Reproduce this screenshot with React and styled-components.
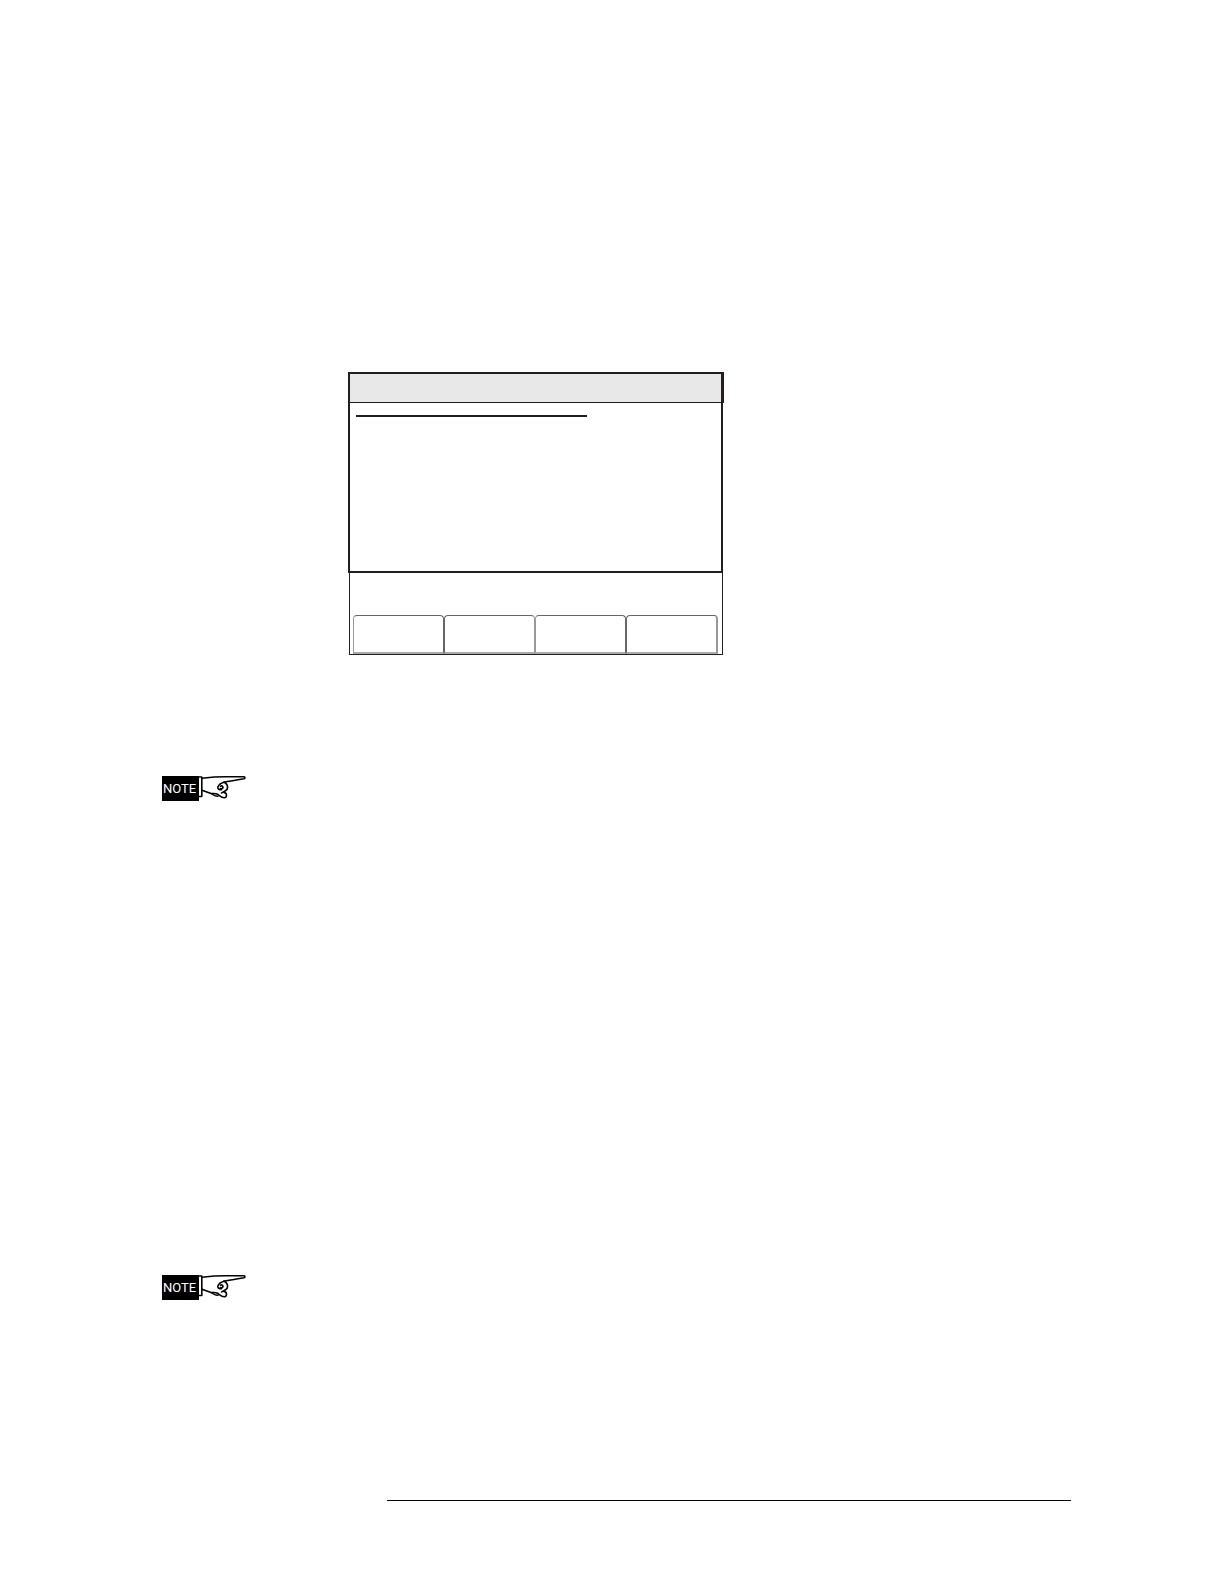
import React from "react";
import styled, { createGlobalStyle } from "styled-components";

const ink = "#231f20";

const GlobalStyle = createGlobalStyle`
  *, *::before, *::after { box-sizing: border-box; }
  body {
    margin: 0;
    background: #fff;
    color: #000;
    font-family: "Liberation Sans", Arial, sans-serif;
  }
`;

const Page = styled.main`
  display: flex;
  flex-direction: column;
  min-height: 100vh;
  padding: 372px 153px 83px 162px;
`;

const Panel = styled.section`
  display: flex;
  flex-direction: column;
  width: 100%;
  max-width: 376px;
  margin-left: 186px;
`;

const TitleBar = styled.header`
  height: 31px;
  background: #e8e8e8;
  border: 2px solid ${ink};
  border-right-width: 3px;
  border-bottom-width: 1px;
`;

const Display = styled.div`
  height: 170px;
  margin-right: 1px;
  padding: 12px 6px;
  border: 2px solid ${ink};
  border-top: 0;
`;

const HeadingRule = styled.hr`
  width: 231px;
  height: 2px;
  margin: 0;
  border: 0;
  background: ${ink};
`;

const KeyArea = styled.div`
  display: flex;
  align-items: flex-end;
  height: 82px;
  margin: 0 1px;
  padding: 0 4px 0 3px;
  border: 1px solid ${ink};
  border-top: 0;
`;

const SoftKey = styled.button`
  flex: 1;
  height: 39px;
  padding: 0;
  background: #fff;
  border: 1px solid #666;
  border-left-color: ${(p) => (p.$softLeft ? "#999" : "#666")};
  border-right-color: ${(p) => (p.$softRight ? "#999" : "#666")};
  border-right-width: ${(p) => (p.$last ? "2px" : "1px")};
  border-bottom: 2px solid #aaa;
  border-radius: 4px 4px 0 0;
`;

const Note = styled.aside`
  display: flex;
  align-items: flex-start;
  margin-top: ${(p) => p.$gap}px;
`;

const NoteLabel = styled.span`
  width: 37px;
  height: 25px;
  padding-right: 2px;
  background: #000;
  color: #fff;
  font-family: Roboto, sans-serif;
  font-size: 13px;
  line-height: 26px;
  text-align: center;
`;

const Hand = styled.svg`
  width: 48px;
  height: 25px;
  fill: none;
  stroke: #000;
  stroke-width: 1.6;
  stroke-linecap: round;
  stroke-linejoin: round;
`;

const FooterRule = styled.hr`
  height: 1px;
  margin: auto 0 0 225px;
  border: 0;
  background: #000;
`;

const keys = [
  { softLeft: true },
  { softRight: true },
  { softLeft: true },
  { softRight: true, last: true },
];

function PointingNote({ gap }) {
  return (
    <Note $gap={gap}>
      <NoteLabel>NOTE</NoteLabel>
      <Hand viewBox="0 0 48 25" aria-hidden="true">
        <path d="M0 1H2.8V20.5H0" />
        <path d="M3 2.2C12 1.2 20 .8 27 .8L45 .8Q47 1.6 45 2.8C38 4 31 5 25 6.2C22 7 19.5 9 18.8 11.2C18.6 13.2 20.5 14 22.5 13.6" />
        <path d="M25 6C27.5 7.5 29 10 28.4 12.5C27.8 14.8 25 15.8 22.5 17" />
        <path d="M21.5 10.2Q23.5 9.2 24 11.2Q23.5 13.2 21.5 12.6" />
        <path d="M25 16.4C28.5 17 28 21.4 25.5 21.8C22.5 22 20.5 19.5 18.5 18.2C16.5 17.2 14.5 17.6 12 17.6L3 14.2" />
        <path d="M13 18Q16 20.6 19 20.2" />
      </Hand>
    </Note>
  );
}

export default function App() {
  return (
    <>
      <GlobalStyle />
      <Page>
        <Panel>
          <TitleBar />
          <Display>
            <HeadingRule />
          </Display>
          <KeyArea>
            {keys.map((key, i) => (
              <SoftKey
                key={i}
                type="button"
                aria-label={`Soft key ${i + 1}`}
                $softLeft={key.softLeft}
                $softRight={key.softRight}
                $last={key.last}
              />
            ))}
          </KeyArea>
        </Panel>
        <PointingNote gap={121} />
        <PointingNote gap={474} />
        <FooterRule />
      </Page>
    </>
  );
}
